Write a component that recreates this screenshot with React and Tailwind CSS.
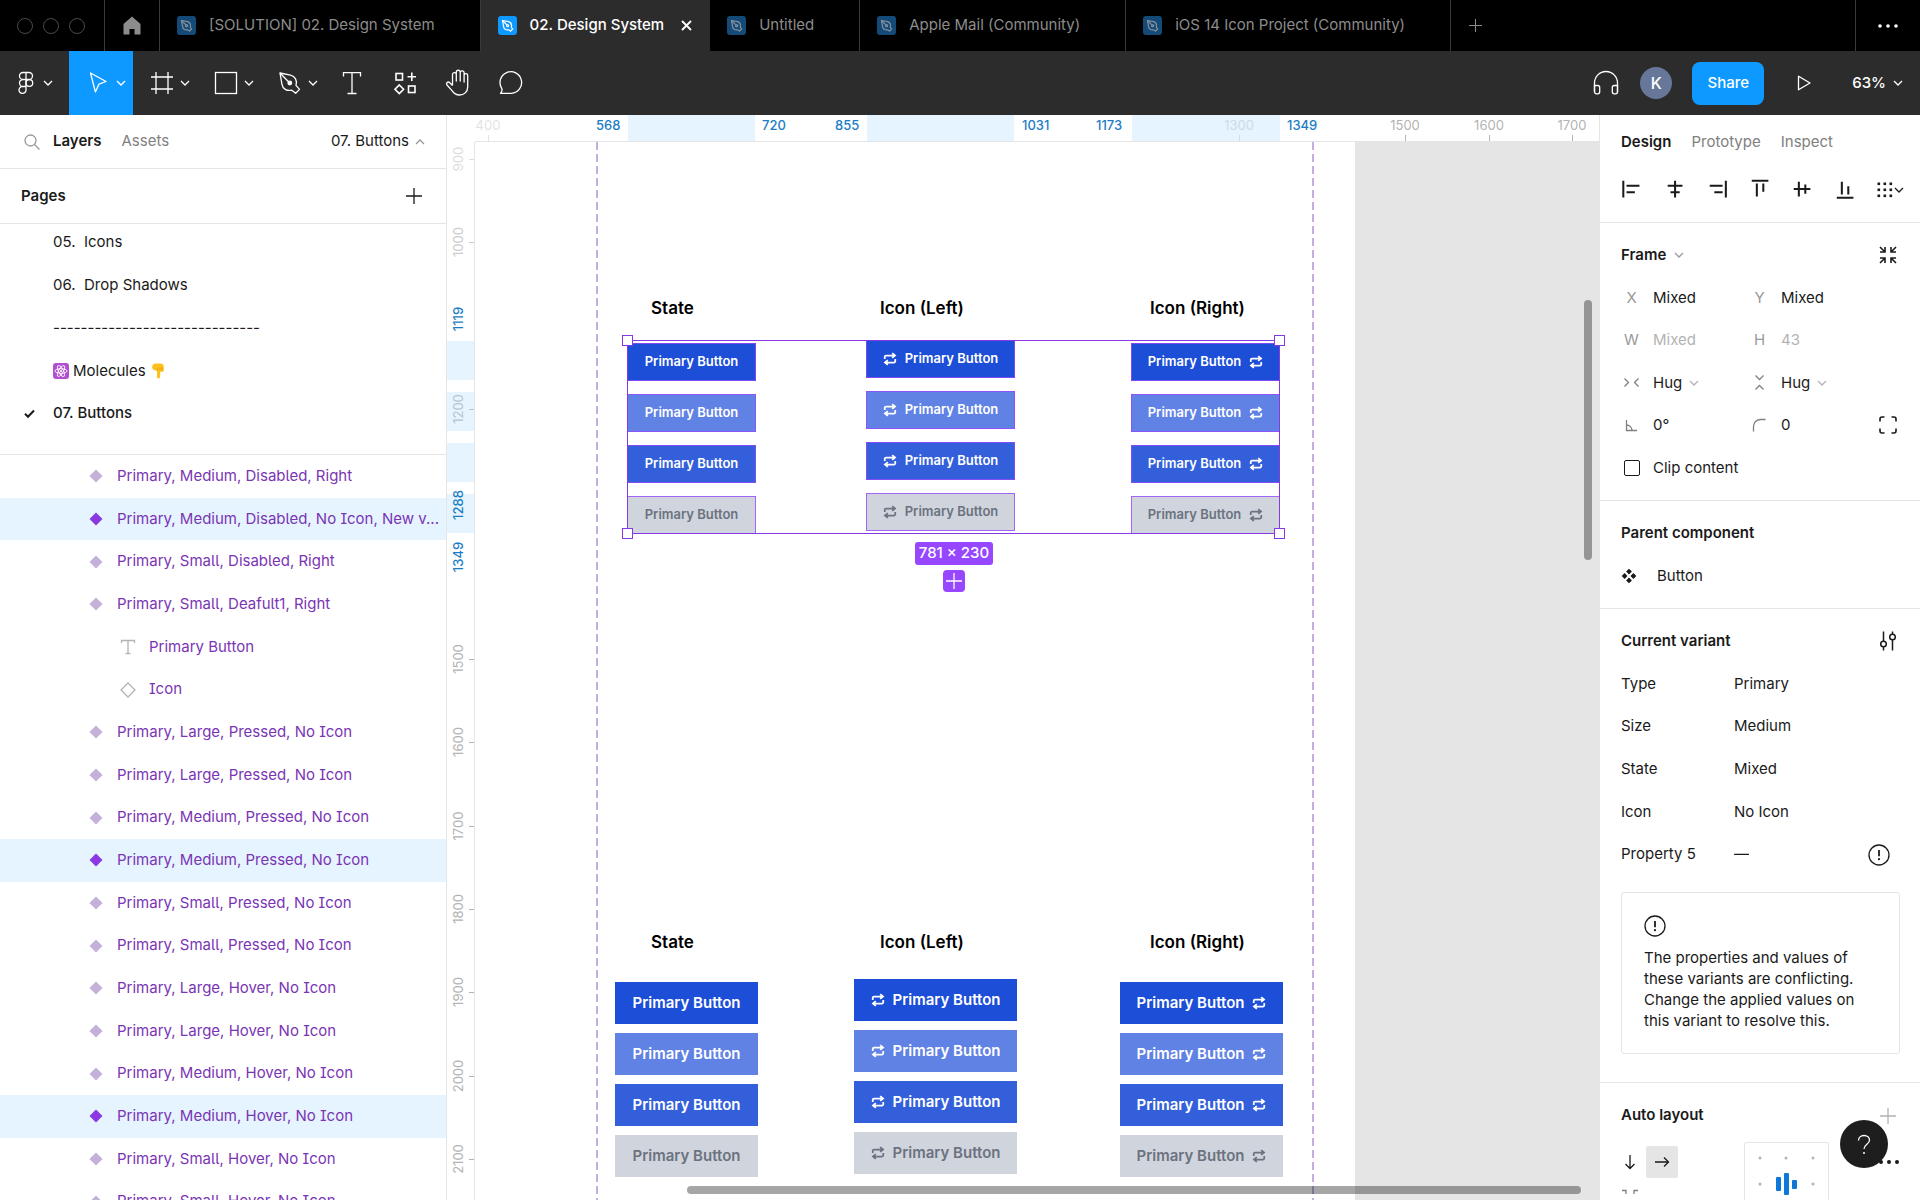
import React from 'react';
import clsx from 'clsx';

const Svg = ({ size = 24, box = 24, className, children, ...rest }) => (
  <svg
    width={size}
    height={size}
    viewBox={`0 0 ${box} ${box}`}
    fill="none"
    stroke="currentColor"
    strokeWidth="1.3"
    className={clsx('shrink-0', className)}
    aria-hidden="true"
    {...rest}
  >
    {children}
  </svg>
);

const Caret = ({ className, up }) => (
  <Svg size={10} box={10} className={className}>
    <path d={up ? 'M1 7l4-4 4 4' : 'M1 3l4 4 4-4'} />
  </Svg>
);

const Plus = ({ size = 16, className }) => (
  <Svg size={size} box={16} className={className}>
    <path d="M8 0v16M0 8h16" />
  </Svg>
);

const FileIcon = ({ active }) => (
  <svg width="19" height="19" viewBox="0 0 19 19" className="shrink-0" aria-hidden="true">
    <rect width="19" height="19" rx="3" fill={active ? '#0d99ff' : '#134a78'} />
    <g fill="none" stroke={active ? '#fff' : '#86909a'} strokeWidth="1.2">
      <path d="M4.5 4.5l6 1.2c2.2.6 3.4 3 2.8 5.6l1.4 1.6-2.2 2.2-1.6-1.3c-2.6.4-4.9-.8-5.3-3.2z" />
      <path d="M4.5 4.5l4.3 4.4" />
      <circle cx="9.6" cy="9.7" r="1" />
    </g>
  </svg>
);

const RepeatIcon = () => (
  <Svg size={14} box={16} strokeWidth="2">
    <path d="M2 8V5.5a1.5 1.5 0 0 1 1.5-1.5H13M10.5 1.2L13.8 4l-3.3 2.8" />
    <path d="M14 8v2.5a1.5 1.5 0 0 1-1.5 1.5H3M5.5 9.2L2.2 12l3.3 2.8" />
  </Svg>
);

const WarningIcon = () => (
  <Svg size={22} box={22}>
    <circle cx="11" cy="11" r="10" />
    <path d="M11 6v6.2" strokeWidth="1.8" />
    <circle cx="11" cy="15.2" r="1.1" fill="currentColor" stroke="none" />
  </Svg>
);

const tabs = [
  { name: '[SOLUTION] 02. Design System' },
  { name: '02. Design System', active: true },
  { name: 'Untitled' },
  { name: 'Apple Mail (Community)' },
  { name: 'iOS 14 Icon Project (Community)' },
];

const TabBar = () => (
  <div className="flex h-[51px] shrink-0 bg-black text-[15px] text-[#8c8c8c]">
    <div className="flex w-[105px] items-center gap-[10px] border-r border-[#3a3a3a] pl-[17px]">
      <span className="size-4 rounded-full border border-[#4a4a4a]" />
      <span className="size-4 rounded-full border border-[#4a4a4a]" />
      <span className="size-4 rounded-full border border-[#4a4a4a]" />
    </div>
    <button type="button" aria-label="Home" className="flex w-[55px] items-center justify-center border-r border-[#3a3a3a]">
      <svg width="18" height="19" viewBox="0 0 18 19" fill="#8c8c8c" aria-hidden="true">
        <path d="M9 0.5L17.5 8v10.5H11.5v-5.5h-5v5.5H0.5V8z" />
      </svg>
    </button>
    {tabs.map(tab => (
      <button
        key={tab.name}
        type="button"
        className={clsx(
          'flex items-center gap-[13px] whitespace-nowrap pl-[17px]',
          tab.active ? 'bg-[#2c2c2c] pr-[18px] font-medium text-white' : 'border-r border-[#3a3a3a] pr-[45px]'
        )}
      >
        <FileIcon active={tab.active} />
        <span>{tab.name}</span>
        {tab.active && (
          <Svg size={11} box={11} className="ml-1" strokeWidth="1.8">
            <path d="M1 1l9 9M10 1l-9 9" />
          </Svg>
        )}
      </button>
    ))}
    <button type="button" aria-label="New tab" className="flex w-12 items-center justify-center">
      <Plus size={13} />
    </button>
    <button type="button" aria-label="More" className="ml-auto flex w-[65px] items-center justify-center border-l border-[#3a3a3a] text-white">
      <Svg size={22} box={22} fill="currentColor" stroke="none">
        <circle cx="3" cy="11" r="1.8" />
        <circle cx="11" cy="11" r="1.8" />
        <circle cx="19" cy="11" r="1.8" />
      </Svg>
    </button>
  </div>
);

const ToolButton = ({ label, active, caret, children }) => (
  <button
    type="button"
    aria-label={label}
    className={clsx(
      'flex h-full items-center text-white',
      caret ? 'w-16 gap-1 pl-[15px]' : 'w-[53px] justify-center',
      active && 'bg-[#0d99ff]'
    )}
  >
    <Svg size={28} box={28}>{children}</Svg>
    {caret && <Caret />}
  </button>
);

const Toolbar = () => (
  <div className="flex h-16 shrink-0 items-center bg-[#2c2c2c] text-white">
    <button type="button" aria-label="Main menu" className="flex h-full w-[69px] items-center gap-1 pl-[13px]">
      <Svg size={26} box={26}>
        <path d="M13 2.5H10a3.5 3.5 0 0 0 0 7h3zM13 2.5h3a3.5 3.5 0 0 1 0 7h-3M13 9.5H10a3.5 3.5 0 0 0 0 7h3zM13 16.5H10a3.5 3.5 0 1 0 3 3.5z" />
        <circle cx="16.3" cy="13" r="3.4" />
      </Svg>
      <Caret />
    </button>
    <ToolButton label="Move" active caret>
      <path d="M6.5 4l15.5 8.5-7 2.6-3.6 7.8z" strokeLinejoin="round" />
    </ToolButton>
    <ToolButton label="Frame" caret>
      <path d="M8 3v22M20 3v22M3 8h22M3 20h22" />
    </ToolButton>
    <ToolButton label="Rectangle" caret>
      <rect x="3.5" y="3.5" width="21" height="21" />
    </ToolButton>
    <ToolButton label="Pen" caret>
      <path d="M4 4l10.5 2.2c4.6 1.2 7 5.3 5.5 10.2l3.5 4-3.8 3.8-3.9-3c-5 1-9.2-1.3-9.9-6z" strokeLinejoin="round" />
      <path d="M4 4l8.5 8.7" />
      <circle cx="13.8" cy="14" r="1.8" fill="currentColor" />
    </ToolButton>
    <ToolButton label="Text">
      <path d="M5.5 7.500V3.600h17v3.900M14 3.600v20.900M9.500 24.500h9" />
    </ToolButton>
    <ToolButton label="Resources">
      <g strokeWidth="1.6">
        <rect x="5" y="4.5" width="6.5" height="6.5" />
        <rect x="17.5" y="17" width="6.5" height="6.5" />
        <path d="M20.800 3.500v8.500M16.500 7.800h8.500M8.300 16l4.300 4.300-4.300 4.300-4.300-4.300z" />
      </g>
    </ToolButton>
    <ToolButton label="Hand">
      <path d="M8.5 16.5V5.5a1.900 1.900 0 0 1 3.800 0V12 3.200a1.900 1.900 0 0 1 3.900 0V12 3.800a1.900 1.900 0 0 1 3.900 0V13 6.500a1.800 1.800 0 0 1 3.600 0V18c0 5-3.700 8-8.200 8-3.500 0-5.600-1.400-7.500-4.400L2.800 15.700c-1-2 1.400-3.500 3-2l2.700 2.800" strokeLinejoin="round" />
    </ToolButton>
    <ToolButton label="Comment">
      <path d="M3.500 24.300c1.600-1.500 2-2.800 1.200-5A10.800 10.800 0 1 1 14.500 24.300z" strokeLinejoin="round" />
    </ToolButton>

    <div className="ml-auto flex items-center">
      <button type="button" aria-label="Audio">
        <Svg size={28} box={28}>
          <path d="M2.500 23V14a11.500 11.500 0 0 1 23 0v9" />
          <path d="M2.500 16.500h3.200a2 2 0 0 1 2 2v4.300a2 2 0 0 1-2 2H4.500a2 2 0 0 1-2-2zM25.500 16.500h-3.200a2 2 0 0 0-2 2v4.300a2 2 0 0 0 2 2h1.200a2 2 0 0 0 2-2z" />
        </Svg>
      </button>
      <span className="ml-5 flex size-8 items-center justify-center rounded-full bg-[#667799] text-base font-medium">K</span>
      <button type="button" className="ml-5 h-[43px] w-[72px] rounded-lg bg-[#0d99ff] text-[15px] font-medium">
        Share
      </button>
      <button type="button" aria-label="Present" className="ml-8">
        <Svg size={16} box={16}>
          <path d="M2.500 1.200v13.600L14 8z" strokeLinejoin="round" />
        </Svg>
      </button>
      <button type="button" className="mr-[17px] ml-10 flex items-center gap-[7px] text-[15px] font-medium">
        63%
        <Caret />
      </button>
    </div>
  </div>
);

const layers = [
  { name: 'Primary, Medium, Disabled, Right' },
  { name: 'Primary, Medium, Disabled, No Icon, New v...', selected: true },
  { name: 'Primary, Small, Disabled, Right' },
  { name: 'Primary, Small, Deafult1, Right' },
  { name: 'Primary Button', kind: 'text' },
  { name: 'Icon', kind: 'instance' },
  { name: 'Primary, Large, Pressed, No Icon' },
  { name: 'Primary, Large, Pressed, No Icon' },
  { name: 'Primary, Medium, Pressed, No Icon' },
  { name: 'Primary, Medium, Pressed, No Icon', selected: true },
  { name: 'Primary, Small, Pressed, No Icon' },
  { name: 'Primary, Small, Pressed, No Icon' },
  { name: 'Primary, Large, Hover, No Icon' },
  { name: 'Primary, Large, Hover, No Icon' },
  { name: 'Primary, Medium, Hover, No Icon' },
  { name: 'Primary, Medium, Hover, No Icon', selected: true },
  { name: 'Primary, Small, Hover, No Icon' },
  { name: 'Primary, Small, Hover, No Icon' },
];

const LayerIcon = ({ kind, selected }) => {
  if (kind === 'text') {
    return (
      <Svg size={16} box={16} className="text-[#b3b3b3]">
        <path d="M1.5 4V1.5h13V4M8 1.5v13M5.5 14.5h5" />
      </Svg>
    );
  }
  if (kind === 'instance') {
    return (
      <Svg size={16} box={16} className="text-[#b3b3b3]">
        <path d="M8 1l7 7-7 7-7-7z" />
      </Svg>
    );
  }
  return (
    <svg width="16" height="16" viewBox="0 0 16 16" className="shrink-0" aria-hidden="true">
      <path d="M8 1.5L14.5 8 8 14.5 1.5 8z" fill={selected ? '#8a38e0' : '#c3b1da'} />
    </svg>
  );
};

const AtomEmoji = () => (
  <svg width="16" height="16" viewBox="0 0 16 16" className="shrink-0" role="img" aria-label="⚛️">
    <rect width="16" height="16" rx="3" fill="#b14fd0" />
    <g fill="none" stroke="#fff" strokeWidth="0.9">
      <ellipse cx="8" cy="8" rx="6" ry="2.3" />
      <ellipse cx="8" cy="8" rx="6" ry="2.3" transform="rotate(60 8 8)" />
      <ellipse cx="8" cy="8" rx="6" ry="2.3" transform="rotate(120 8 8)" />
    </g>
    <circle cx="8" cy="8" r="1.1" fill="#fff" />
  </svg>
);

const PointDownEmoji = () => (
  <svg width="16" height="16" viewBox="0 0 16 16" className="shrink-0" role="img" aria-label="👇">
    <path d="M2.500 2.500C3 1.200 4 .5 5.500.5h5c1.900 0 3.300 1.100 3.300 3v3.800c0 1.800-2.600 2-3.600 1.300v5.200c0 2.200-3.200 2.200-3.200 0V7.800L4 7C2 6.200 1.800 4.200 2.500 2.500z" fill="#fcc21b" />
    <path d="M9.900 4.200v3.200M11.900 4.400v2.700M7 7.800c.3-1 .7-1.800 0-2.700" fill="none" stroke="#e08f1b" strokeWidth="0.7" />
  </svg>
);

const PageItem = ({ current, children }) => (
  <li className="flex items-center pl-6">
    <span className="w-[29px]">
      {current && (
        <Svg size={11} box={11} strokeWidth="2">
          <path d="M1 5.8L4 8.8 10 2.5" />
        </Svg>
      )}
    </span>
    <button type="button" className={clsx('flex items-center gap-1 whitespace-pre', current && 'font-medium')}>
      {children}
    </button>
  </li>
);

const LeftPanel = () => (
  <aside className="flex w-[447px] shrink-0 flex-col overflow-hidden border-r border-[#e5e5e5] bg-white text-[15px] text-[#1a1a1a]">
    <div className="flex h-[54px] shrink-0 items-center border-b border-[#e5e5e5] pr-[21px] pl-6">
      <Svg size={16} box={16} className="mr-[13px] text-[#999999]">
        <circle cx="6.5" cy="6.5" r="5.5" />
        <path d="M10.5 10.5l5 5" />
      </Svg>
      <button type="button" className="mr-5 font-semibold">Layers</button>
      <button type="button" className="text-[#808080]">Assets</button>
      <button type="button" className="ml-auto flex items-center gap-[6px]">
        07. Buttons
        <Caret up className="text-[#999999]" />
      </button>
    </div>
    <div className="flex h-[55px] shrink-0 items-center justify-between border-b border-[#e5e5e5] pr-6 pl-[21px]">
      <h2 className="font-semibold">Pages</h2>
      <button type="button" aria-label="Add page">
        <Plus />
      </button>
    </div>
    <div className="h-[231px] shrink-0 overflow-hidden border-b border-[#e5e5e5]">
      <ul className="-mt-[3px] grid h-[214px] auto-rows-fr">
        <PageItem>05.  Icons</PageItem>
        <PageItem>06.  Drop Shadows</PageItem>
        <PageItem>------------------------------</PageItem>
        <PageItem>
          <AtomEmoji />
          Molecules
          <PointDownEmoji />
        </PageItem>
        <PageItem current>07. Buttons</PageItem>
      </ul>
    </div>
    <ul className="grid h-192 shrink-0 auto-rows-fr text-[#7a35b4] [font-feature-settings:'cv05','cv08']">
      {layers.map((layer, index) => (
        <li key={index} className={clsx('flex', layer.selected && 'bg-[#e5f4ff]')}>
          <button
            type="button"
            className={clsx('flex items-center gap-[13px] whitespace-nowrap', layer.kind ? 'pl-30' : 'pl-[88px]')}
          >
            <LayerIcon kind={layer.kind} selected={layer.selected} />
            {layer.name}
          </button>
        </li>
      ))}
    </ul>
  </aside>
);

// Ruler positions are measured from the canvas origin, just after the left ruler.
const topTicks = [
  { value: 400, at: 'left-[13px]', tone: 'text-[#e3e3e3]' },
  { value: 1300, at: 'left-[764px]', tone: 'text-[#cfdbe5]' },
  { value: 1500, at: 'left-[930px]', tone: 'text-[#b3b3b3]' },
  { value: 1600, at: 'left-[1014px]', tone: 'text-[#b3b3b3]' },
  { value: 1700, at: 'left-[1097px]', tone: 'text-[#b3b3b3]' },
];

const topMarks = [
  { value: 568, at: 'left-[121px]' },
  { value: 720, at: 'left-[287px]' },
  { value: 855, at: 'left-[360px]' },
  { value: 1031, at: 'left-[547px]' },
  { value: 1173, at: 'left-[621px]' },
  { value: 1349, at: 'left-[812px]' },
];

const sideTicks = [
  { value: 900, at: 'top-[17px]', tone: 'text-[#dddddd]' },
  { value: 1000, at: 'top-[100px]', tone: 'text-[#cccccc]' },
  { value: 1200, at: 'top-[267px]', tone: 'text-[#b9c4cd]' },
  { value: 1500, at: 'top-[517px]', tone: 'text-[#b3b3b3]' },
  { value: 1600, at: 'top-[600px]', tone: 'text-[#b3b3b3]' },
  { value: 1700, at: 'top-[684px]', tone: 'text-[#b3b3b3]' },
  { value: 1800, at: 'top-[767px]', tone: 'text-[#b3b3b3]' },
  { value: 1900, at: 'top-[850px]', tone: 'text-[#b3b3b3]' },
  { value: 2000, at: 'top-[934px]', tone: 'text-[#b3b3b3]' },
  { value: 2100, at: 'top-[1017px]', tone: 'text-[#b3b3b3]' },
];

const sideMarks = [
  { value: 1119, at: 'top-[177px]' },
  { value: 1288, at: 'top-[363px]' },
  { value: 1349, at: 'top-[415px]' },
];

const TopRuler = () => (
  <div className="relative ml-[28px] h-[27px] shrink-0 overflow-hidden border-b border-[#e5e5e5] bg-white text-[13px]">
    <div className="absolute inset-y-0 left-[153px] w-[127px] bg-[#e5f4ff]" />
    <div className="absolute inset-y-0 left-[392px] w-[147px] bg-[#e5f4ff]" />
    <div className="absolute inset-y-0 left-[657px] w-[148px] bg-[#e5f4ff]" />
    {topTicks.map(tick => (
      <div key={tick.value} className={clsx('absolute inset-y-0 w-0', tick.at, tick.tone)}>
        <span className="absolute top-0 left-0 -translate-x-1/2 leading-5">{tick.value}</span>
        <span className="absolute bottom-0 left-0 h-[6px] w-px bg-current" />
      </div>
    ))}
    {topMarks.map(mark => (
      <span key={mark.value} className={clsx('absolute top-0 leading-5 font-medium text-[#1b7dc4]', mark.at)}>
        {mark.value}
      </span>
    ))}
  </div>
);

const SideRuler = () => (
  <div className="relative w-[28px] shrink-0 overflow-hidden border-r border-[#e5e5e5] bg-white text-[13px]">
    <div className="absolute inset-x-0 top-[199px] h-[39px] bg-[#e5f4ff]" />
    <div className="absolute inset-x-0 top-[250px] h-[39px] bg-[#e5f4ff]" />
    <div className="absolute inset-x-0 top-[301px] h-[39px] bg-[#e5f4ff]" />
    <div className="absolute inset-x-0 top-[352px] h-[39px] bg-[#e5f4ff]" />
    {sideTicks.map(tick => (
      <div key={tick.value} className={clsx('absolute inset-x-0 h-0', tick.at, tick.tone)}>
        <span className="absolute top-0 left-[11px] -translate-x-1/2 -translate-y-1/2 -rotate-90 leading-none">{tick.value}</span>
        <span className="absolute top-0 right-0 h-px w-[5px] bg-current" />
      </div>
    ))}
    {sideMarks.map(mark => (
      <div key={mark.value} className={clsx('absolute inset-x-0 h-0', mark.at)}>
        <span className="absolute top-0 left-[11px] -translate-x-1/2 -translate-y-1/2 -rotate-90 leading-none font-medium text-[#1b7dc4]">
          {mark.value}
        </span>
      </div>
    ))}
  </div>
);

const buttonStates = [
  'bg-[#1d4ed8] text-white',
  'bg-[#6182e5] text-white',
  'bg-[#335fdb] text-white',
  'bg-[#d0d5dd] text-[#6b7280]',
];

const ButtonColumn = ({ className, icon, size }) => (
  <div className={clsx('absolute flex flex-col', size === 'medium' ? 'gap-[13px]' : 'gap-[9px]', className)}>
    {buttonStates.map(state => (
      <button
        key={state}
        type="button"
        className={clsx(
          'flex items-center justify-center gap-2 font-semibold whitespace-nowrap',
          size === 'medium' ? 'h-[38px] border border-[#9747ff]/80 text-[13px]' : 'h-[42px] text-[15px]',
          state
        )}
      >
        {icon === 'left' && <RepeatIcon />}
        Primary Button
        {icon === 'right' && <RepeatIcon />}
      </button>
    ))}
  </div>
);

const Guide = ({ className }) => (
  <div
    className={clsx(
      'absolute inset-y-0 w-[2px] bg-[repeating-linear-gradient(to_bottom,#c4afdf_0px,#c4afdf_8px,transparent_8px,transparent_12px)]',
      className
    )}
  />
);

const Handle = ({ className }) => <span className={clsx('absolute size-[11px] border border-[#8638e5] bg-white', className)} />;

const Canvas = () => (
  <div className="relative flex-1 overflow-hidden bg-[#e5e5e5]">
    <div className="absolute inset-y-0 left-0 w-[880px] bg-white" />
    <Guide className="left-[121px]" />
    <Guide className="left-[837px]" />

    <h3 className="absolute top-[154px] left-[176px] text-[17px] font-semibold text-black">State</h3>
    <h3 className="absolute top-[154px] left-[405px] text-[17px] font-semibold text-black">Icon (Left)</h3>
    <h3 className="absolute top-[154px] left-[675px] text-[17px] font-semibold text-black">Icon (Right)</h3>
    <ButtonColumn size="medium" className="top-[201px] left-[152px] w-[129px]" />
    <ButtonColumn size="medium" icon="left" className="top-[198px] left-[391px] w-[149px]" />
    <ButtonColumn size="medium" icon="right" className="top-[201px] left-[656px] w-[149px]" />

    <div className="absolute top-[198px] left-[152px] h-[194px] w-[653px] border border-[#8638e5]">
      <Handle className="-top-[6px] -left-[6px]" />
      <Handle className="-top-[6px] -right-[6px]" />
      <Handle className="-bottom-[6px] -left-[6px]" />
      <Handle className="-right-[6px] -bottom-[6px]" />
    </div>
    <span className="absolute top-[400px] left-[440px] flex h-[23px] w-[78px] items-center justify-center rounded-[3px] bg-[#9747ff] text-[15px] font-medium whitespace-nowrap text-white">
      781 × 230
    </span>
    <button
      type="button"
      aria-label="Add variant"
      className="absolute top-[428px] left-[468px] flex size-[22px] items-center justify-center rounded bg-[#9747ff] text-white"
    >
      <Plus />
    </button>

    <h3 className="absolute top-[788px] left-[176px] text-[17px] font-semibold text-black">State</h3>
    <h3 className="absolute top-[788px] left-[405px] text-[17px] font-semibold text-black">Icon (Left)</h3>
    <h3 className="absolute top-[788px] left-[675px] text-[17px] font-semibold text-black">Icon (Right)</h3>
    <ButtonColumn size="large" className="top-[840px] left-[140px] w-[143px]" />
    <ButtonColumn size="large" icon="left" className="top-[837px] left-[379px] w-[163px]" />
    <ButtonColumn size="large" icon="right" className="top-[840px] left-[645px] w-[163px]" />

    <div className="absolute top-[158px] right-[7px] h-[260px] w-2 rounded-full bg-black/35" />
    <div className="absolute right-[18px] bottom-[6px] left-[212px] h-2 rounded-full bg-black/35" />
  </div>
);

const alignIcons = [
  { label: 'Align left', shape: <path d="M2.5 3v18M6 8.5h14M6 15.5h9" /> },
  { label: 'Align horizontal centers', shape: <path d="M12 3v18M4 8.5h16M7 15.5h10" /> },
  { label: 'Align right', shape: <path d="M21.5 3v18M4 8.5h14M9 15.5h9" /> },
  { label: 'Align top', shape: <path d="M3 3h18M8.5 6v14M15.5 6v9" /> },
  { label: 'Align vertical centers', shape: <path d="M3 12h18M8.5 4v16M15.5 7v10" /> },
  { label: 'Align bottom', shape: <path d="M3 21.5h18M8.5 4v14M15.5 9v9" /> },
];

const Field = ({ label, value, disabled }) => (
  <label className="flex items-center">
    <span className="w-[21px] text-center text-[#999999]">{label}</span>
    <input
      defaultValue={value}
      disabled={disabled}
      className={clsx('ml-[11px] w-[84px] bg-transparent outline-none', disabled && 'text-[#b3b3b3]')}
    />
  </label>
);

const HugField = ({ label, children }) => (
  <label className="flex items-center">
    <Svg size={21} box={21} className="text-[#808080]">{children}</Svg>
    <select aria-label={label} className="ml-[11px] appearance-none bg-transparent outline-none">
      <option>Hug</option>
    </select>
    <Caret className="ml-[6px] text-[#b3b3b3]" />
  </label>
);

const IconField = ({ label, value, children }) => (
  <label className="flex items-center">
    <Svg size={21} box={21} className="text-[#808080]">{children}</Svg>
    <input aria-label={label} defaultValue={value} className="ml-[11px] w-[84px] bg-transparent outline-none" />
  </label>
);

const variantProps = [
  ['Type', 'Primary'],
  ['Size', 'Medium'],
  ['State', 'Mixed'],
  ['Icon', 'No Icon'],
  ['Property 5', '—'],
];

const RightPanel = () => (
  <aside className="relative flex w-[321px] shrink-0 flex-col overflow-hidden border-l border-[#e5e5e5] bg-white text-[15px] text-[#1a1a1a] *:shrink-0">
    <div className="flex h-[54px] items-center gap-5 pl-[21px] text-[#808080]">
      <button type="button" className="font-semibold text-[#1a1a1a]">Design</button>
      <button type="button">Prototype</button>
      <button type="button">Inspect</button>
    </div>
    <div className="flex h-[54px] items-start justify-between border-b border-[#e5e5e5] pt-[9px] pr-4 pl-[21px]">
      {alignIcons.map(icon => (
        <button key={icon.label} type="button" aria-label={icon.label}>
          <Svg size={24} box={26} strokeWidth="2.2">{icon.shape}</Svg>
        </button>
      ))}
      <button type="button" aria-label="Distribute" className="flex h-6 items-center">
        <Svg size={18} box={18} fill="currentColor" stroke="none">
          {[1, 7, 13].map(y => [1, 7, 13].map(x => <rect key={`${x}-${y}`} x={x + 0.5} y={y + 0.5} width="2.6" height="2.6" />))}
        </Svg>
        <Caret />
      </button>
    </div>

    <div className="grid h-[278px] auto-rows-fr border-b border-[#e5e5e5] py-[11px] pr-5 pl-[21px]">
      <div className="flex items-center">
        <h2 className="font-semibold">Frame</h2>
        <Caret className="ml-2 text-[#999999]" />
        <button type="button" aria-label="Resize to fit" className="ml-auto">
          <Svg size={24} box={24} strokeWidth="1.6">
            <path d="M4 4l4 4M9 4v5H4M20 4l-4 4M15 4v5h5M4 20l4-4M9 20v-5H4M20 20l-4-4M15 20v-5h5" />
          </Svg>
        </button>
      </div>
      <div className="grid grid-cols-[128px_1fr]">
        <Field label="X" value="Mixed" />
        <Field label="Y" value="Mixed" />
      </div>
      <div className="grid grid-cols-[128px_1fr]">
        <Field label="W" value="Mixed" disabled />
        <Field label="H" value="43" disabled />
      </div>
      <div className="grid grid-cols-[128px_1fr]">
        <HugField label="Horizontal resizing">
          <path d="M3.5 6.5l4 4-4 4M17.5 6.5l-4 4 4 4" />
        </HugField>
        <HugField label="Vertical resizing">
          <path d="M6.5 3.5l4 4 4-4M6.5 17.5l4-4 4 4" />
        </HugField>
      </div>
      <div className="grid grid-cols-[128px_1fr_auto] items-center">
        <IconField label="Rotation" value="0°">
          <path d="M5.5 5v10.5H16M5.5 10a5.5 5.5 0 0 1 5.5 5.5" />
        </IconField>
        <IconField label="Corner radius" value="0">
          <path d="M4.5 16.5v-5a7 7 0 0 1 7-7h5" />
        </IconField>
        <button type="button" aria-label="Independent corners">
          <Svg size={24} box={24} strokeWidth="1.6">
            <path d="M4 8.5V6a2 2 0 0 1 2-2h2.5M15.5 4H18a2 2 0 0 1 2 2v2.5M20 15.5V18a2 2 0 0 1-2 2h-2.500M8.5 20H6a2 2 0 0 1-2-2v-2.500" />
          </Svg>
        </button>
      </div>
      <label className="flex items-center">
        <input type="checkbox" className="mx-[3px] size-4 appearance-none rounded-[2px] border border-[#1a1a1a]" />
        <span className="ml-[10px]">Clip content</span>
      </label>
    </div>

    <div className="grid h-[108px] auto-rows-fr border-b border-[#e5e5e5] py-[11px] pl-[21px]">
      <h2 className="flex items-center font-semibold">Parent component</h2>
      <div className="flex items-center gap-5">
        <Svg size={16} box={16} fill="currentColor" stroke="none">
          <path d="M8 .7l2.900 2.900L8 6.500 5.100 3.600zM8 9.500l2.900 2.900L8 15.300l-2.900-2.900zM3.600 5.100L6.500 8l-2.900 2.900L.7 8zM12.400 5.100L15.300 8l-2.900 2.900L9.500 8z" />
        </Svg>
        <a href="#button">Button</a>
      </div>
    </div>

    <div className="border-b border-[#e5e5e5] pt-[11px] pr-5 pb-7 pl-[21px]">
      <div className="grid h-64 auto-rows-fr">
        <div className="flex items-center justify-between">
          <h2 className="font-semibold">Current variant</h2>
          <button type="button" aria-label="Edit properties">
            <Svg size={24} box={24} strokeWidth="1.5">
              <path d="M7.500 2.500v10M7.500 18v3.500M16.500 2.500v2.500M16.500 11v10.500" />
              <circle cx="7.5" cy="15" r="2.8" />
              <circle cx="16.5" cy="8" r="2.8" />
            </Svg>
          </button>
        </div>
        {variantProps.map(([name, value]) => (
          <div key={name} className="flex items-center">
            <label htmlFor={`variant-${name}`} className="w-[113px]">{name}</label>
            <select id={`variant-${name}`} className="appearance-none bg-transparent outline-none">
              <option>{value}</option>
            </select>
            {name === 'Property 5' && (
              <span className="mr-[10px] ml-auto">
                <WarningIcon />
              </span>
            )}
          </div>
        ))}
      </div>
      <div className="mt-4 rounded-[3px] border border-[#e5e5e5] px-[22px] py-[22px]">
        <WarningIcon />
        <p className="mt-[10px] leading-[21px]">
          The properties and values of these variants are conflicting. Change the applied values on this variant to resolve this.
        </p>
      </div>
    </div>

    <div className="pt-[11px] pr-5 pl-[21px]">
      <div className="flex h-[43px] items-center justify-between">
        <h2 className="font-semibold">Auto layout</h2>
        <span className="flex w-6 justify-center text-[#b3b3b3]">
          <Plus />
        </span>
      </div>
      <div className="flex items-start">
        <button type="button" aria-label="Vertical direction" className="mt-[9px] flex h-8 w-[25px] items-center pl-[1px]">
          <Svg size={16} box={16}>
            <path d="M8 1v13.500M3.500 10L8 14.500 12.500 10" />
          </Svg>
        </button>
        <button type="button" aria-label="Horizontal direction" className="mt-[9px] flex size-8 items-center justify-center rounded-[2px] bg-[#e5e5e5]">
          <Svg size={16} box={16}>
            <path d="M1 8h13.500M10 3.500L14.500 8 10 12.500" />
          </Svg>
        </button>
        <div className="mt-[5px] ml-[66px] h-[85px] w-[85px] rounded-[2px] border border-[#e5e5e5]">
          <svg viewBox="0 0 83 83" className="size-full" aria-hidden="true">
            <g fill="#b3b3b3">
              <circle cx="15" cy="15" r="1.5" />
              <circle cx="41" cy="15" r="1.5" />
              <circle cx="68" cy="15" r="1.5" />
              <circle cx="15" cy="41" r="1.5" />
              <circle cx="68" cy="41" r="1.5" />
            </g>
            <g fill="#0c79d8">
              <rect x="31" y="34" width="5" height="14" rx="1" />
              <rect x="39" y="30" width="5" height="22" rx="1" />
              <rect x="47" y="37" width="5" height="9" rx="1" />
            </g>
          </svg>
        </div>
        <button type="button" aria-label="Advanced layout" className="mt-[14px] ml-auto">
          <Svg size={22} box={22} fill="currentColor" stroke="none">
            <circle cx="3" cy="11" r="2" />
            <circle cx="11" cy="11" r="2" />
            <circle cx="19" cy="11" r="2" />
          </Svg>
        </button>
      </div>
      <Svg size={22} box={22} className="-mt-[38px] text-[#808080]">
        <path d="M1 1.500h4V5M13 5V1.500h4" />
      </Svg>
    </div>

    <button
      type="button"
      aria-label="Help"
      className="absolute right-8 bottom-8 flex size-12 items-center justify-center rounded-full bg-[#1e1e1e] text-white"
    >
      <Svg size={24} box={24}>
        <path d="M6.500 8.500c0-3 2.300-5 5.500-5s5.500 2 5.500 4.800c0 4-5.500 4-5.500 8.700" />
        <circle cx="12" cy="21" r="1" fill="currentColor" stroke="none" />
      </Svg>
    </button>
  </aside>
);

const App = () => (
  <div className="flex h-screen flex-col overflow-hidden bg-white font-['Inter',sans-serif]">
    <TabBar />
    <Toolbar />
    <main className="flex min-h-0 flex-1">
      <LeftPanel />
      <section className="flex min-w-0 flex-1 flex-col bg-white">
        <TopRuler />
        <div className="flex min-h-0 flex-1">
          <SideRuler />
          <Canvas />
        </div>
      </section>
      <RightPanel />
    </main>
  </div>
);

export default App;
